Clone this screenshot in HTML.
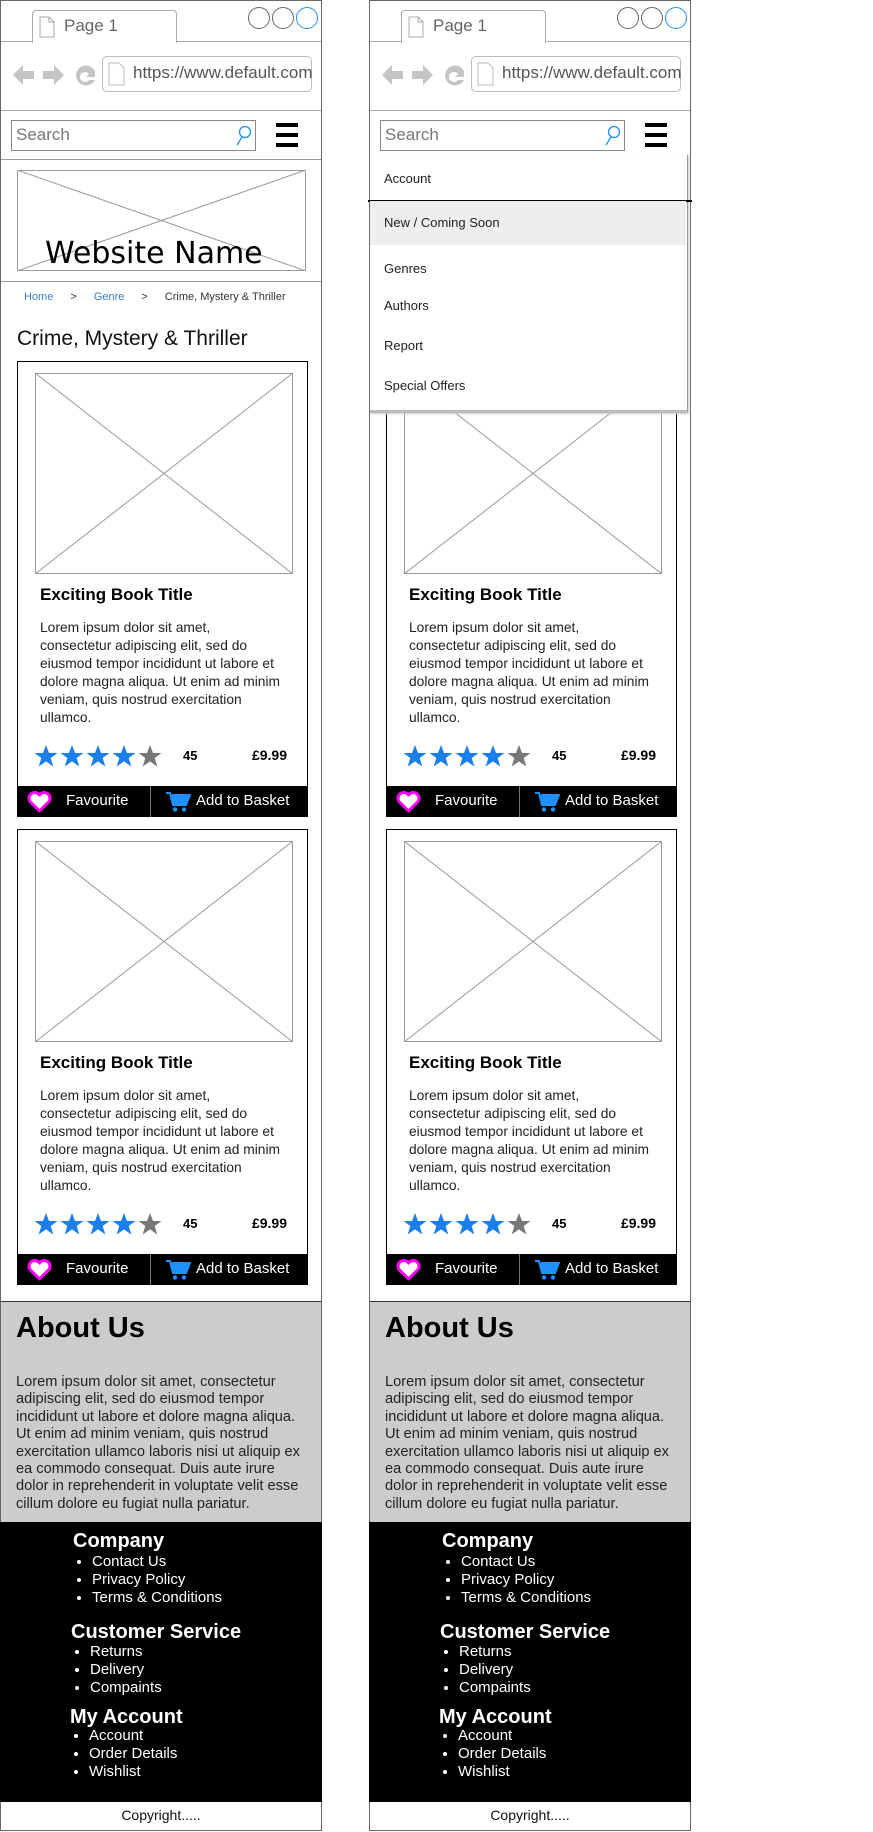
<!DOCTYPE html>
<html><head><meta charset="utf-8"><style>
*{margin:0;padding:0;box-sizing:border-box}
body{width:873px;height:1832px;background:#fff;position:relative;overflow:hidden;font-family:"Liberation Sans",Arial,sans-serif;color:#000}
.p{position:absolute;top:0;width:322px;height:1831px;border:1px solid #666;border-top:1px solid #666}
.a{position:absolute}
.hl{position:absolute;left:0;width:320px;height:1px;background:#aaa}
.circ{position:absolute;top:6px;width:22px;height:22px;border-radius:50%;border:1.3px solid #666}
.card{position:absolute;left:16px;width:291px;height:456px;border:1.3px solid #000}
.img{position:absolute;border:1px solid #999}
.ttl{position:absolute;left:22px;top:223px;font-weight:bold;font-size:17px}
.txt{position:absolute;left:22px;top:257px;white-space:nowrap;font-size:13.8px;line-height:18px;color:#222}
.stars{position:absolute;left:17px;top:383px}
.n45{position:absolute;left:165px;top:386px;font-weight:bold;font-size:13px}
.pr{position:absolute;right:20px;top:385px;font-weight:bold;font-size:14px}
.bar{position:absolute;left:-1px;top:424px;width:291px;height:31px;background:#000;color:#fff;font-size:15px}
.bar .dv{position:absolute;left:133px;top:0;width:1px;height:31px;background:#777}
.about{position:absolute;left:0;top:1300px;width:320px;height:221px;background:#ccc;border-top:1px solid #333}
.about h2{position:absolute;left:15px;top:10px;font-size:29px;font-weight:bold}
.about p{position:absolute;left:15px;top:72px;white-space:nowrap;font-size:14.6px;line-height:17.4px;color:#222}
.foot{position:absolute;left:-1px;top:1521px;width:322px;height:280px;background:#000;color:#fff}
.foot h3{position:absolute;font-size:20px;font-weight:bold}
.foot ul{position:absolute;font-size:15px;line-height:18px;list-style:disc}
.copy{position:absolute;left:0;top:1806px;width:320px;text-align:center;font-size:14px;color:#111}
.menu{position:absolute;left:0;top:154px;width:318px;height:258px;background:#fff;border-right:1.5px solid #999;border-bottom:3px solid #bbb;box-shadow:1px 1px 2px #ccc;font-size:13px;color:#222}
.menu div{position:absolute;left:14px}
</style></head><body>

<!-- PANEL 1 -->
<div class="p" style="left:0">
  <div class="a" style="left:31px;top:9px;width:145px;height:33px;border:1px solid #aaa;border-bottom:none;border-radius:4px 4px 0 0;background:#fff"></div>
  <svg class="a" style="left:38px;top:15px" width="16" height="22"><path d="M1 1h9l5 5v15H1z" fill="#fff" stroke="#aaa"/><path d="M10 1v5h5" fill="none" stroke="#aaa"/></svg>
  <div class="a" style="left:63px;top:15px;font-size:17px;color:#666">Page 1</div>
  <div class="circ" style="left:247px"></div><div class="circ" style="left:271px"></div><div class="circ" style="left:295px;border-color:#1e90ff"></div>
  <div class="hl" style="top:40px"></div><div class="a" style="left:32px;top:40px;width:143px;height:2px;background:#fff"></div>
  <svg class="a" style="left:11px;top:61px" width="85" height="26"><path d="M1 13 11 3v6h11v8H11v6z" fill="#c4c4c4"/><path d="M52 13 42 3v6H31v8h11v6z" fill="#c4c4c4"/><path d="M83 9a10 10 0 1 0 0 9h-6a5 5 0 1 1 0-6l-3 3h9V6z" fill="#c4c4c4"/></svg>
  <div class="a" style="left:101px;top:55px;width:210px;height:36px;border:1px solid #bbb;border-radius:5px"></div>
  <svg class="a" style="left:107px;top:61px" width="18" height="24"><path d="M1 1h10l5 5v17H1z" fill="#fff" stroke="#bbb"/></svg>
  <div class="a" style="left:132px;top:62px;font-size:17px;color:#555">https://www.default.com</div>
  <div class="hl" style="top:109px"></div>
  <div class="a" style="left:10px;top:119px;width:245px;height:31px;border:1.3px solid #888"></div>
  <div class="a" style="left:15px;top:124px;font-size:17px;color:#777">Search</div>
  <svg class="a" style="left:233px;top:124px" width="18" height="21"><circle cx="11" cy="7" r="5.5" fill="none" stroke="#1e90ff" stroke-width="1.3"/><path d="M8 12 3 20" stroke="#1e90ff" stroke-width="1.3"/></svg>
  <div class="a" style="left:275px;top:122px;width:22px;height:4px;background:#000"></div>
  <div class="a" style="left:275px;top:132px;width:22px;height:4px;background:#000"></div>
  <div class="a" style="left:275px;top:142px;width:22px;height:4px;background:#000"></div>
  <div class="hl" style="top:158px;background:#999"></div>
  <svg class="a" style="left:16px;top:169px" width="289" height="101"><rect x=".5" y=".5" width="288" height="100" fill="#fff" stroke="#999"/><path d="M0 0 289 101M289 0 0 101" stroke="#999"/></svg>
  <div class="a" style="left:44px;top:235px;font-size:30px;font-family:'DejaVu Sans',sans-serif">Website Name</div>
  <div class="hl" style="top:280px;background:#999"></div>
  <div class="a" style="left:23px;top:290px;font-size:11px;color:#333"><span style="color:#3a7fc8">Home</span><span style="margin-left:17px">&gt;</span><span style="margin-left:17px;color:#3a7fc8">Genre</span><span style="margin-left:17px">&gt;</span><span style="margin-left:17px">Crime, Mystery &amp; Thriller</span></div>
  <div class="a" style="left:16px;top:326px;font-size:21px;color:#111">Crime, Mystery &amp; Thriller</div>

  <div class="card" style="top:360px">
    <svg class="img" style="left:17px;top:11px;border:none" width="258" height="201"><rect x=".5" y=".5" width="257" height="200" fill="#fff" stroke="#999"/><path d="M0 0 258 201M258 0 0 201" stroke="#999"/></svg>
    <div class="ttl">Exciting Book Title</div>
    <div class="txt">Lorem ipsum dolor sit amet,<br>consectetur adipiscing elit, sed do<br>eiusmod tempor incididunt ut labore et<br>dolore magna aliqua. Ut enim ad minim<br>veniam, quis nostrud exercitation<br>ullamco.</div>
    <svg class="stars" width="135" height="24"><g fill="#1a7fe8"><path id="s" d="M11 0l3 8h8.5l-6.8 5 2.6 8.5L11 16.4 3.7 21.5l2.6-8.5L-.5 8H8z"/><use href="#s" x="26"/><use href="#s" x="52"/><use href="#s" x="78"/></g><use href="#s" x="104" fill="#777"/></svg>
    <div class="n45">45</div><div class="pr">£9.99</div>
    <div class="bar"><svg class="a" style="left:10px;top:5px" width="25" height="22"><path d="M12.5 20 3 10.5A5 5 0 0 1 12.5 4 5 5 0 0 1 22 10.5z" fill="#fff" stroke="#f0f" stroke-width="3" stroke-linejoin="round"/></svg><div class="a" style="left:49px;top:6px">Favourite</div><div class="dv"></div><svg class="a" style="left:148px;top:5px" width="26" height="22"><path d="M1 2h4l3 12h13l4-10H7" fill="#1e90ff" stroke="#1e90ff" stroke-width="2" stroke-linejoin="round"/><circle cx="10" cy="18.5" r="2.2" fill="#1e90ff"/><circle cx="19" cy="18.5" r="2.2" fill="#1e90ff"/></svg><div class="a" style="left:179px;top:6px">Add to Basket</div></div>
  </div>

  <div class="card" style="top:828px">
    <svg class="img" style="left:17px;top:11px;border:none" width="258" height="201"><rect x=".5" y=".5" width="257" height="200" fill="#fff" stroke="#999"/><path d="M0 0 258 201M258 0 0 201" stroke="#999"/></svg>
    <div class="ttl">Exciting Book Title</div>
    <div class="txt">Lorem ipsum dolor sit amet,<br>consectetur adipiscing elit, sed do<br>eiusmod tempor incididunt ut labore et<br>dolore magna aliqua. Ut enim ad minim<br>veniam, quis nostrud exercitation<br>ullamco.</div>
    <svg class="stars" width="135" height="24"><g fill="#1a7fe8"><use href="#s"/><use href="#s" x="26"/><use href="#s" x="52"/><use href="#s" x="78"/></g><use href="#s" x="104" fill="#777"/></svg>
    <div class="n45">45</div><div class="pr">£9.99</div>
    <div class="bar"><svg class="a" style="left:10px;top:5px" width="25" height="22"><path d="M12.5 20 3 10.5A5 5 0 0 1 12.5 4 5 5 0 0 1 22 10.5z" fill="#fff" stroke="#f0f" stroke-width="3" stroke-linejoin="round"/></svg><div class="a" style="left:49px;top:6px">Favourite</div><div class="dv"></div><svg class="a" style="left:148px;top:5px" width="26" height="22"><path d="M1 2h4l3 12h13l4-10H7" fill="#1e90ff" stroke="#1e90ff" stroke-width="2" stroke-linejoin="round"/><circle cx="10" cy="18.5" r="2.2" fill="#1e90ff"/><circle cx="19" cy="18.5" r="2.2" fill="#1e90ff"/></svg><div class="a" style="left:179px;top:6px">Add to Basket</div></div>
  </div>

  <div class="about"><h2>About Us</h2><p>Lorem ipsum dolor sit amet, consectetur<br>adipiscing elit, sed do eiusmod tempor<br>incididunt ut labore et dolore magna aliqua.<br>Ut enim ad minim veniam, quis nostrud<br>exercitation ullamco laboris nisi ut aliquip ex<br>ea commodo consequat. Duis aute irure<br>dolor in reprehenderit in voluptate velit esse<br>cillum dolore eu fugiat nulla pariatur.</p></div>
  <div class="foot">
    <h3 style="left:73px;top:8px">Company</h3>
    <ul style="left:92px;top:31px"><li>Contact Us</li><li>Privacy Policy</li><li>Terms &amp; Conditions</li></ul>
    <h3 style="left:71px;top:99px">Customer Service</h3>
    <ul style="left:90px;top:121px"><li>Returns</li><li>Delivery</li><li>Compaints</li></ul>
    <h3 style="left:70px;top:184px">My Account</h3>
    <ul style="left:89px;top:205px"><li>Account</li><li>Order Details</li><li>Wishlist</li></ul>
  </div>
  <div class="copy">Copyright.....</div>
</div>

<!-- PANEL 2 -->
<div class="p" style="left:369px">
  <div class="a" style="left:31px;top:9px;width:145px;height:33px;border:1px solid #aaa;border-bottom:none;border-radius:4px 4px 0 0;background:#fff"></div>
  <svg class="a" style="left:38px;top:15px" width="16" height="22"><path d="M1 1h9l5 5v15H1z" fill="#fff" stroke="#aaa"/><path d="M10 1v5h5" fill="none" stroke="#aaa"/></svg>
  <div class="a" style="left:63px;top:15px;font-size:17px;color:#666">Page 1</div>
  <div class="circ" style="left:247px"></div><div class="circ" style="left:271px"></div><div class="circ" style="left:295px;border-color:#1e90ff"></div>
  <div class="hl" style="top:40px"></div><div class="a" style="left:32px;top:40px;width:143px;height:2px;background:#fff"></div>
  <svg class="a" style="left:11px;top:61px" width="85" height="26"><path d="M1 13 11 3v6h11v8H11v6z" fill="#c4c4c4"/><path d="M52 13 42 3v6H31v8h11v6z" fill="#c4c4c4"/><path d="M83 9a10 10 0 1 0 0 9h-6a5 5 0 1 1 0-6l-3 3h9V6z" fill="#c4c4c4"/></svg>
  <div class="a" style="left:101px;top:55px;width:210px;height:36px;border:1px solid #bbb;border-radius:5px"></div>
  <svg class="a" style="left:107px;top:61px" width="18" height="24"><path d="M1 1h10l5 5v17H1z" fill="#fff" stroke="#bbb"/></svg>
  <div class="a" style="left:132px;top:62px;font-size:17px;color:#555">https://www.default.com</div>
  <div class="hl" style="top:109px"></div>
  <div class="a" style="left:10px;top:119px;width:245px;height:31px;border:1.3px solid #888"></div>
  <div class="a" style="left:15px;top:124px;font-size:17px;color:#777">Search</div>
  <svg class="a" style="left:233px;top:124px" width="18" height="21"><circle cx="11" cy="7" r="5.5" fill="none" stroke="#1e90ff" stroke-width="1.3"/><path d="M8 12 3 20" stroke="#1e90ff" stroke-width="1.3"/></svg>
  <div class="a" style="left:275px;top:122px;width:22px;height:4px;background:#000"></div>
  <div class="a" style="left:275px;top:132px;width:22px;height:4px;background:#000"></div>
  <div class="a" style="left:275px;top:142px;width:22px;height:4px;background:#000"></div>

  <div class="card" style="top:360px">
    <svg class="img" style="left:17px;top:11px;border:none" width="258" height="201"><rect x=".5" y=".5" width="257" height="200" fill="#fff" stroke="#999"/><path d="M0 0 258 201M258 0 0 201" stroke="#999"/></svg>
    <div class="ttl">Exciting Book Title</div>
    <div class="txt">Lorem ipsum dolor sit amet,<br>consectetur adipiscing elit, sed do<br>eiusmod tempor incididunt ut labore et<br>dolore magna aliqua. Ut enim ad minim<br>veniam, quis nostrud exercitation<br>ullamco.</div>
    <svg class="stars" width="135" height="24"><g fill="#1a7fe8"><use href="#s"/><use href="#s" x="26"/><use href="#s" x="52"/><use href="#s" x="78"/></g><use href="#s" x="104" fill="#777"/></svg>
    <div class="n45">45</div><div class="pr">£9.99</div>
    <div class="bar"><svg class="a" style="left:10px;top:5px" width="25" height="22"><path d="M12.5 20 3 10.5A5 5 0 0 1 12.5 4 5 5 0 0 1 22 10.5z" fill="#fff" stroke="#f0f" stroke-width="3" stroke-linejoin="round"/></svg><div class="a" style="left:49px;top:6px">Favourite</div><div class="dv"></div><svg class="a" style="left:148px;top:5px" width="26" height="22"><path d="M1 2h4l3 12h13l4-10H7" fill="#1e90ff" stroke="#1e90ff" stroke-width="2" stroke-linejoin="round"/><circle cx="10" cy="18.5" r="2.2" fill="#1e90ff"/><circle cx="19" cy="18.5" r="2.2" fill="#1e90ff"/></svg><div class="a" style="left:179px;top:6px">Add to Basket</div></div>
  </div>

  <div class="menu">
    <div style="top:16px">Account</div>
    <div style="left:-2px;top:45px;width:324px;height:1.5px;background:#000"></div>
    <div style="left:0;top:46px;width:316px;height:44px;background:#eee"></div>
    <div style="top:60px">New / Coming Soon</div>
    <div style="top:106px">Genres</div>
    <div style="top:143px">Authors</div>
    <div style="top:183px">Report</div>
    <div style="top:223px">Special Offers</div>
  </div>

  <div class="card" style="top:828px">
    <svg class="img" style="left:17px;top:11px;border:none" width="258" height="201"><rect x=".5" y=".5" width="257" height="200" fill="#fff" stroke="#999"/><path d="M0 0 258 201M258 0 0 201" stroke="#999"/></svg>
    <div class="ttl">Exciting Book Title</div>
    <div class="txt">Lorem ipsum dolor sit amet,<br>consectetur adipiscing elit, sed do<br>eiusmod tempor incididunt ut labore et<br>dolore magna aliqua. Ut enim ad minim<br>veniam, quis nostrud exercitation<br>ullamco.</div>
    <svg class="stars" width="135" height="24"><g fill="#1a7fe8"><use href="#s"/><use href="#s" x="26"/><use href="#s" x="52"/><use href="#s" x="78"/></g><use href="#s" x="104" fill="#777"/></svg>
    <div class="n45">45</div><div class="pr">£9.99</div>
    <div class="bar"><svg class="a" style="left:10px;top:5px" width="25" height="22"><path d="M12.5 20 3 10.5A5 5 0 0 1 12.5 4 5 5 0 0 1 22 10.5z" fill="#fff" stroke="#f0f" stroke-width="3" stroke-linejoin="round"/></svg><div class="a" style="left:49px;top:6px">Favourite</div><div class="dv"></div><svg class="a" style="left:148px;top:5px" width="26" height="22"><path d="M1 2h4l3 12h13l4-10H7" fill="#1e90ff" stroke="#1e90ff" stroke-width="2" stroke-linejoin="round"/><circle cx="10" cy="18.5" r="2.2" fill="#1e90ff"/><circle cx="19" cy="18.5" r="2.2" fill="#1e90ff"/></svg><div class="a" style="left:179px;top:6px">Add to Basket</div></div>
  </div>

  <div class="about"><h2>About Us</h2><p>Lorem ipsum dolor sit amet, consectetur<br>adipiscing elit, sed do eiusmod tempor<br>incididunt ut labore et dolore magna aliqua.<br>Ut enim ad minim veniam, quis nostrud<br>exercitation ullamco laboris nisi ut aliquip ex<br>ea commodo consequat. Duis aute irure<br>dolor in reprehenderit in voluptate velit esse<br>cillum dolore eu fugiat nulla pariatur.</p></div>
  <div class="foot">
    <h3 style="left:73px;top:8px">Company</h3>
    <ul style="left:92px;top:31px"><li>Contact Us</li><li>Privacy Policy</li><li>Terms &amp; Conditions</li></ul>
    <h3 style="left:71px;top:99px">Customer Service</h3>
    <ul style="left:90px;top:121px"><li>Returns</li><li>Delivery</li><li>Compaints</li></ul>
    <h3 style="left:70px;top:184px">My Account</h3>
    <ul style="left:89px;top:205px"><li>Account</li><li>Order Details</li><li>Wishlist</li></ul>
  </div>
  <div class="copy">Copyright.....</div>
</div>
</body></html>
